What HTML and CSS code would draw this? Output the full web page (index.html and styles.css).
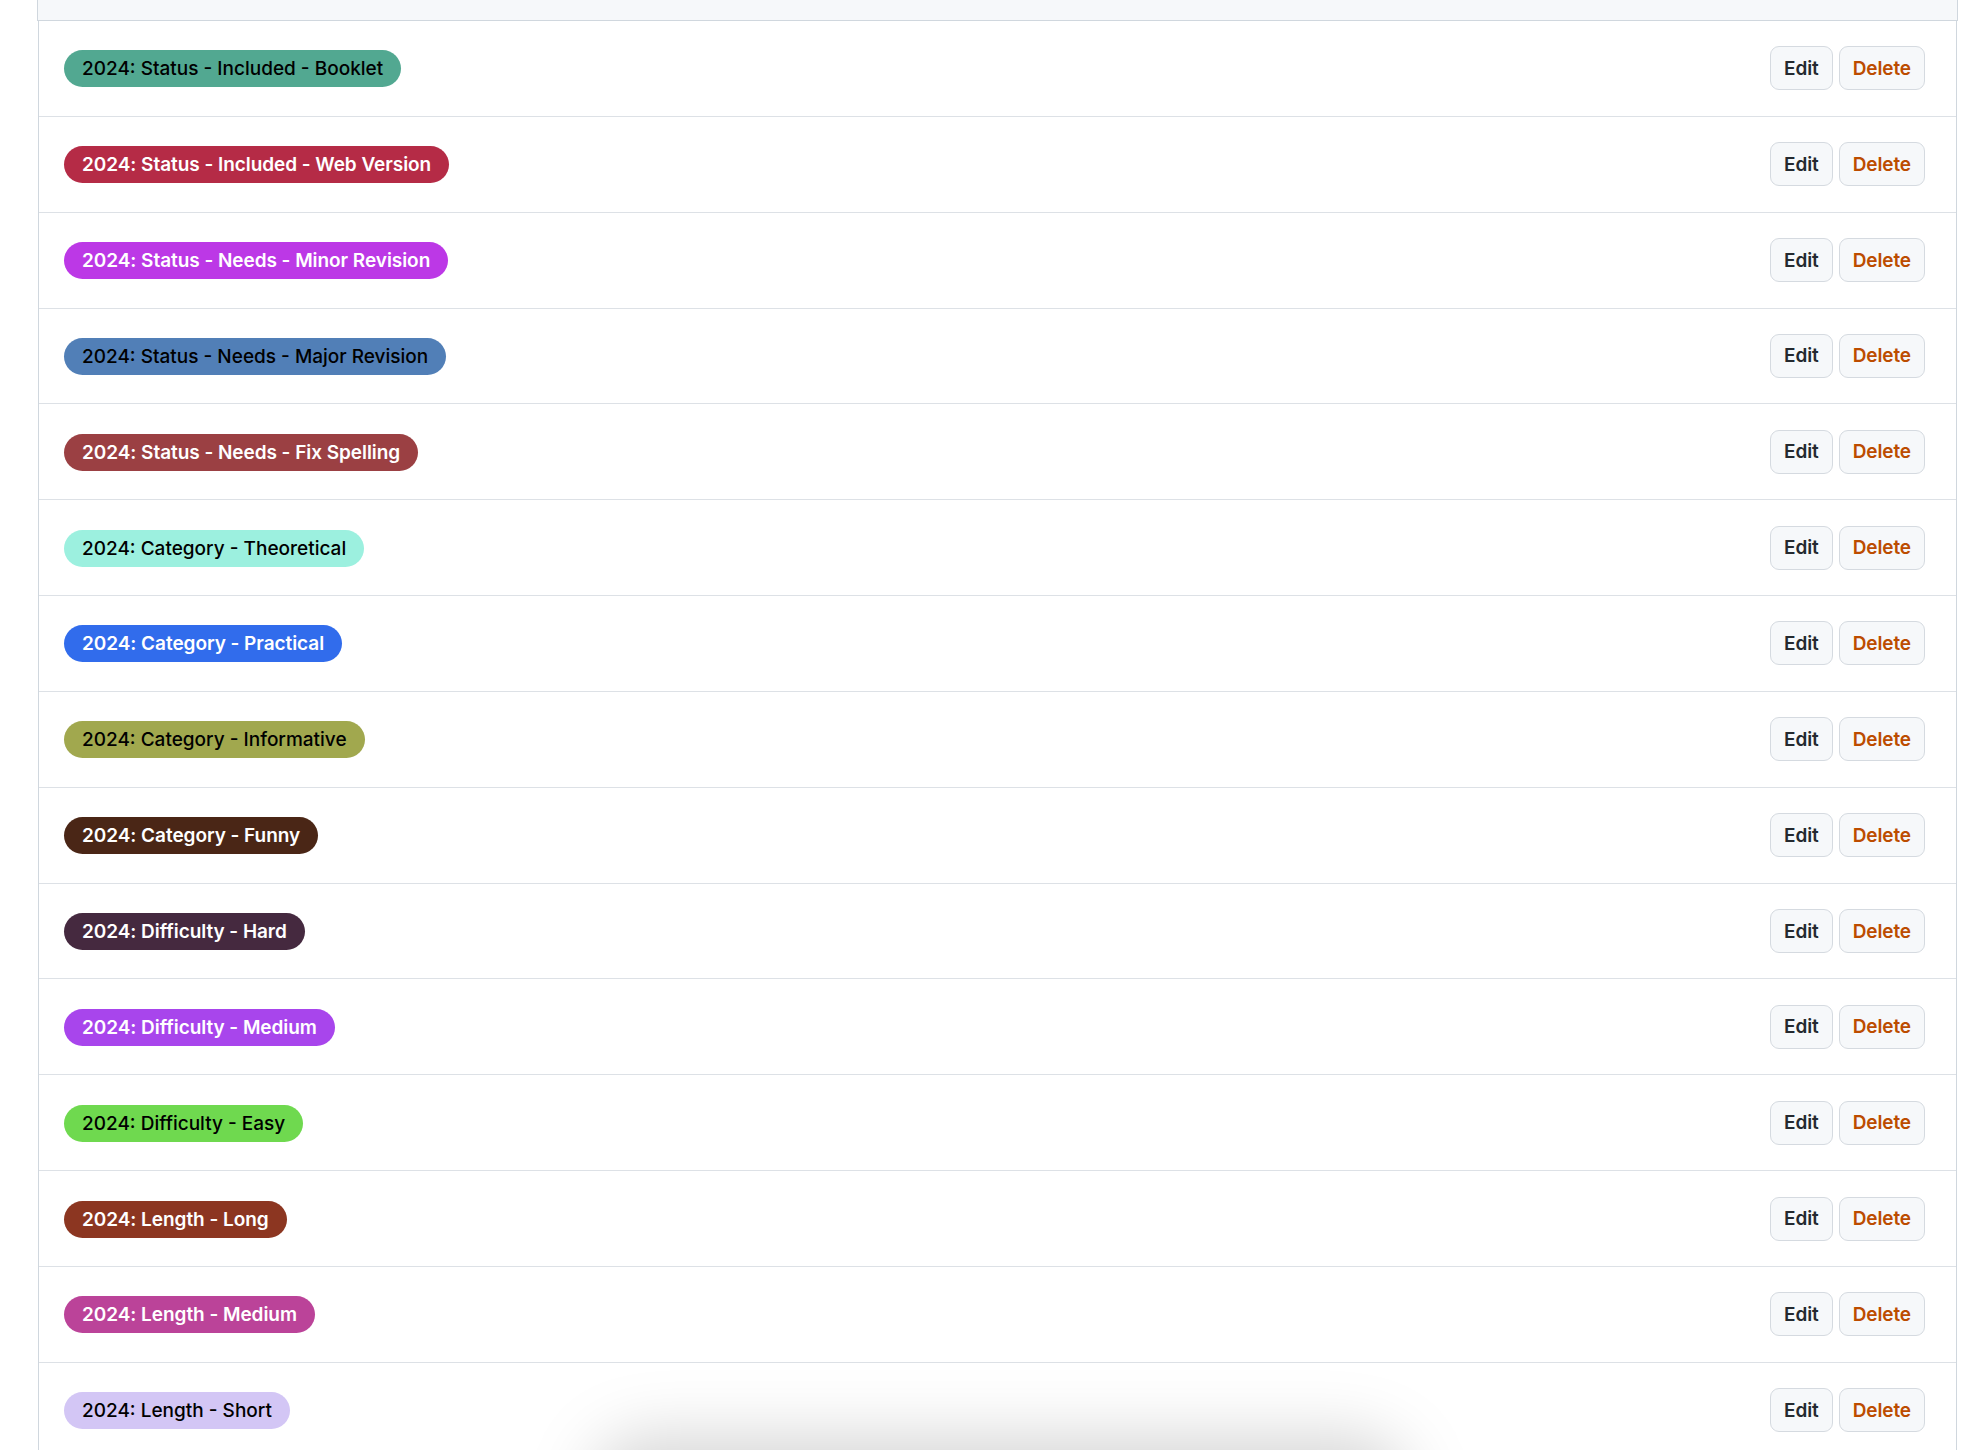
FILE: index.html
```html
<!DOCTYPE html>
<html lang="en">
<head>
<meta charset="utf-8">
<title>Labels</title>
<link rel="stylesheet" href="styles.css">
</head>
<body>
<div class="box">
  <div class="box-header"></div>
  <div class="rows">
    <div class="row"><span class="label dark" style="background:#52a891">2024: Status - Included - Booklet</span><div class="actions"><button class="btn">Edit</button><button class="btn danger">Delete</button></div></div>
    <div class="row"><span class="label light" style="background:#b52b46">2024: Status - Included - Web Version</span><div class="actions"><button class="btn">Edit</button><button class="btn danger">Delete</button></div></div>
    <div class="row"><span class="label light" style="background:#bc38e6">2024: Status - Needs - Minor Revision</span><div class="actions"><button class="btn">Edit</button><button class="btn danger">Delete</button></div></div>
    <div class="row"><span class="label dark" style="background:#517fb7">2024: Status - Needs - Major Revision</span><div class="actions"><button class="btn">Edit</button><button class="btn danger">Delete</button></div></div>
    <div class="row"><span class="label light" style="background:#9b4043">2024: Status - Needs - Fix Spelling</span><div class="actions"><button class="btn">Edit</button><button class="btn danger">Delete</button></div></div>
    <div class="row"><span class="label dark" style="background:#9cf0df">2024: Category - Theoretical</span><div class="actions"><button class="btn">Edit</button><button class="btn danger">Delete</button></div></div>
    <div class="row"><span class="label light" style="background:#316cec">2024: Category - Practical</span><div class="actions"><button class="btn">Edit</button><button class="btn danger">Delete</button></div></div>
    <div class="row"><span class="label dark" style="background:#a1a84e">2024: Category - Informative</span><div class="actions"><button class="btn">Edit</button><button class="btn danger">Delete</button></div></div>
    <div class="row"><span class="label light" style="background:#4a2616">2024: Category - Funny</span><div class="actions"><button class="btn">Edit</button><button class="btn danger">Delete</button></div></div>
    <div class="row"><span class="label light" style="background:#45293f">2024: Difficulty - Hard</span><div class="actions"><button class="btn">Edit</button><button class="btn danger">Delete</button></div></div>
    <div class="row"><span class="label light" style="background:#a845ec">2024: Difficulty - Medium</span><div class="actions"><button class="btn">Edit</button><button class="btn danger">Delete</button></div></div>
    <div class="row"><span class="label dark" style="background:#6fd94f">2024: Difficulty - Easy</span><div class="actions"><button class="btn">Edit</button><button class="btn danger">Delete</button></div></div>
    <div class="row"><span class="label light" style="background:#8c3621">2024: Length - Long</span><div class="actions"><button class="btn">Edit</button><button class="btn danger">Delete</button></div></div>
    <div class="row"><span class="label light" style="background:#bb4399">2024: Length - Medium</span><div class="actions"><button class="btn">Edit</button><button class="btn danger">Delete</button></div></div>
    <div class="row"><span class="label dark" style="background:#d3c6f5">2024: Length - Short</span><div class="actions"><button class="btn">Edit</button><button class="btn danger">Delete</button></div></div>
  </div>
</div>
<div class="shadow"></div>
</body>
</html>
```
FILE: styles.css
```css
html, body {
  margin: 0;
  padding: 0;
  background: #ffffff;
  overflow: hidden;
}
body {
  font-family: Inter, "Noto Sans", "Liberation Sans", sans-serif;
  height: 1450px;
  position: relative;
}
.box {
  margin-left: 37px;
  width: 1921px;
}
.box-header {
  height: 20px;
  background: #f6f8fa;
  border-left: 1px solid #d0d7de;
  border-right: 1px solid #d0d7de;
  border-bottom: 1px solid #d0d7de;
}
.rows {
  border-left: 1px solid #d0d7de;
  border-right: 1px solid #d0d7de;
  margin-left: 1px;
  margin-right: 1px;
}
.row {
  height: 94.85px;
  border-bottom: 1px solid #dde1e6;
  display: flex;
  align-items: center;
  justify-content: space-between;
  padding-left: 25px;
  padding-right: 31px;
}
.label {
  display: inline-block;
  height: 37px;
  line-height: 37px;
  padding: 0 18px;
  margin-top: 1px;
  border-radius: 20px;
  font-size: 19px;
  white-space: nowrap;
}
.label.dark { color: #000000; font-weight: 500; }
.label.light { color: #ffffff; font-weight: 600; letter-spacing: -0.05px; }
.actions {
  display: flex;
  gap: 6px;
}
.btn {
  height: 44px;
  padding: 0 13px;
  font-family: inherit;
  font-size: 19px;
  font-weight: 600;
  letter-spacing: -0.1px;
  color: #24292f;
  background: #f6f8fa;
  border: 1px solid #d5dae0;
  border-radius: 9px;
}
.btn.danger { color: #bc4c00; }
.shadow {
  position: absolute;
  left: 590px;
  width: 820px;
  top: 1435px;
  height: 120px;
  background: rgba(0, 0, 0, 0.16);
  border-radius: 60px;
  filter: blur(32px);
}
```
